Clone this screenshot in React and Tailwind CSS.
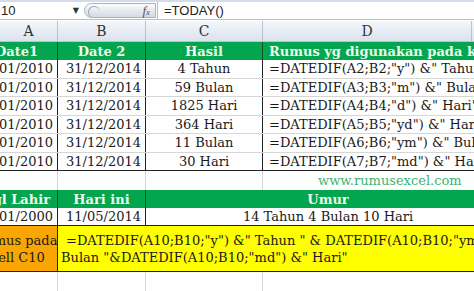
import React from "react";

const serif = { fontFamily: '"DejaVu Serif", "Liberation Serif", serif' };

const rows = [
  ["01/01/2010", "31/12/2014", "4 Tahun", '=DATEDIF(A2;B2;"y") &" Tahun"'],
  ["01/01/2010", "31/12/2014", "59 Bulan", '=DATEDIF(A3;B3;"m") &" Bulan"'],
  ["01/01/2010", "31/12/2014", "1825 Hari", '=DATEDIF(A4;B4;"d") &" Hari"'],
  ["01/01/2010", "31/12/2014", "364 Hari", '=DATEDIF(A5;B5;"yd") &" Hari"'],
  ["01/01/2010", "31/12/2014", "11 Bulan", '=DATEDIF(A6;B6;"ym") &" Bulan"'],
  ["01/01/2010", "31/12/2014", "30 Hari", '=DATEDIF(A7;B7;"md") &" Hari"'],
];

const FormulaBar = () => (
  <div className="flex h-[20px] border-t-2 border-b border-t-[#d3dceb] border-b-[#b4bfcd] bg-white text-[#222]">
    {/* name box */}
    <div className="w-[84px] shrink-0 flex items-center justify-between pl-[1px] pr-[5px]">
      <span className="text-[13px] leading-none" style={{ fontFamily: '"Liberation Sans", sans-serif' }}>
        10
      </span>
      <span className="text-[8px] leading-none text-[#333]">▼</span>
    </div>
    {/* fx button */}
    <div className="w-[72px] shrink-0 my-[1px] flex items-center justify-end pr-[5px] rounded-l-full border border-[#a9b4c2] bg-gradient-to-b from-[#fbfcfd] to-[#d3dae4] relative">
      <div className="absolute left-[3px] top-[2px] w-[12px] h-[12px] rounded-full border-l border-t border-[#9aa6b5]" />
      <span className="text-[13px] italic leading-none text-[#555]" style={{ fontFamily: '"Liberation Serif", serif' }}>
        f<span className="text-[9px]">x</span>
      </span>
    </div>
    <div className="w-[1px] shrink-0 bg-[#b4bfcd] ml-[1px]" />
    <div className="flex-1 flex items-center pl-[6px]">
      <span className="text-[13px] leading-none" style={{ fontFamily: '"Liberation Sans", sans-serif' }}>
        =TODAY()
      </span>
    </div>
  </div>
);

export default function App() {
  return (
    <div className="w-[474px] h-[291px] overflow-hidden bg-white relative" style={serif}>
      <FormulaBar />
      <div className="h-[1px]" />
      <div className="-ml-[24px] w-[600px] text-[13px] text-[#1a1a1a]">
        {/* column letters */}
        <div className="flex h-[21px] bg-gradient-to-b from-[#f4f7fb] to-[#dbe3ee] border-b border-[#b9c4d2] text-[#333] text-[14px]">
          <div className="w-[82px] flex items-center justify-center pl-[24px] border-r border-[#b9c4d2]">A</div>
          <div className="w-[88px] flex items-center justify-center border-r border-[#b9c4d2]">B</div>
          <div className="w-[117px] flex items-center justify-center border-r border-[#b9c4d2]">C</div>
          <div className="w-[209px] flex items-center justify-center border-r border-[#b9c4d2]">D</div>
          <div className="flex-1" />
        </div>

        {/* header row */}
        <div className="flex h-[18px] bg-[#04a54f] text-[#effbe9] font-bold leading-none">
          <div className="w-[82px] flex items-center justify-center border-r border-[#14502c]">Date1</div>
          <div className="w-[88px] flex items-center justify-center border-r border-[#14502c]">Date 2</div>
          <div className="w-[117px] flex items-center justify-center border-r border-[#14502c]">Hasil</div>
          <div className="w-[209px] flex items-center pl-[6px] whitespace-nowrap">
            Rumus yg digunakan pada kolom C
          </div>
          <div className="flex-1" />
        </div>

        {/* data rows */}
        {rows.map((r, i) => (
          <div
            key={i}
            className={`flex h-[18.5px] leading-none ${i === rows.length - 1 ? "border-b border-[#222]" : "border-b border-[#d6d6d6]"}`}
          >
            <div className="w-[82px] flex items-center justify-end pr-[4px] border-r border-[#222]">{r[0]}</div>
            <div className="w-[88px] flex items-center justify-end pr-[4px] border-r border-[#222]">{r[1]}</div>
            <div className="w-[117px] flex items-center justify-center border-r border-[#222]">{r[2]}</div>
            <div className="w-[209px] flex items-center pl-[6px] whitespace-nowrap">{r[3]}</div>
            <div className="flex-1" />
          </div>
        ))}

        {/* empty row with site */}
        <div className="flex h-[19px] leading-none">
          <div className="w-[82px] border-r border-[#d6d6d6]" />
          <div className="w-[88px] border-r border-[#d6d6d6]" />
          <div className="w-[117px] border-r border-[#d6d6d6]" />
          <div className="w-[209px] flex items-center pl-[55px] whitespace-nowrap text-[#3cb371]">www.rumusexcel.com</div>
          <div className="flex-1" />
        </div>

        {/* Tgl Lahir header */}
        <div className="flex h-[18px] bg-[#04a54f] text-[#effbe9] font-bold leading-none">
          <div className="w-[82px] flex items-center justify-center whitespace-nowrap border-r border-[#14502c]">Tgl Lahir</div>
          <div className="w-[88px] flex items-center justify-center border-r border-[#14502c]">Hari ini</div>
          <div className="w-[364px] flex items-center justify-center">Umur</div>
          <div className="flex-1" />
        </div>

        {/* values */}
        <div className="flex h-[18px] leading-none border-b border-[#222]">
          <div className="w-[82px] flex items-center justify-end pr-[4px] border-r border-[#222]">01/01/2000</div>
          <div className="w-[88px] flex items-center justify-end pr-[4px] border-r border-[#222]">11/05/2014</div>
          <div className="w-[364px] flex items-center justify-center">14 Tahun 4 Bulan 10 Hari</div>
          <div className="flex-1" />
        </div>

        {/* formula explanation */}
        <div className="flex h-[46px] leading-[17px] border-b border-[#222]">
          <div className="w-[82px] flex flex-col items-center justify-center bg-[#f9a602] border-r border-[#222] whitespace-nowrap">
            <span>Rumus pada</span>
            <span>Cell C10</span>
          </div>
          <div className="flex-1 flex flex-col justify-center bg-[#ffff00] whitespace-nowrap">
            <span className="pl-[8px]">=DATEDIF(A10;B10;"y") &amp;" Tahun " &amp; DATEDIF(A10;B10;"ym") &amp;" Bulan</span>
            <span className="pl-[3px]">Bulan "&amp;DATEDIF(A10;B10;"md") &amp;" Hari"</span>
          </div>
        </div>

        {/* empty row */}
        <div className="flex h-[30px]">
          <div className="w-[82px] border-r border-[#d6d6d6]" />
          <div className="w-[88px] border-r border-[#d6d6d6]" />
          <div className="w-[117px] border-r border-[#d6d6d6]" />
          <div className="w-[209px]" />
          <div className="flex-1" />
        </div>
      </div>
    </div>
  );
}
